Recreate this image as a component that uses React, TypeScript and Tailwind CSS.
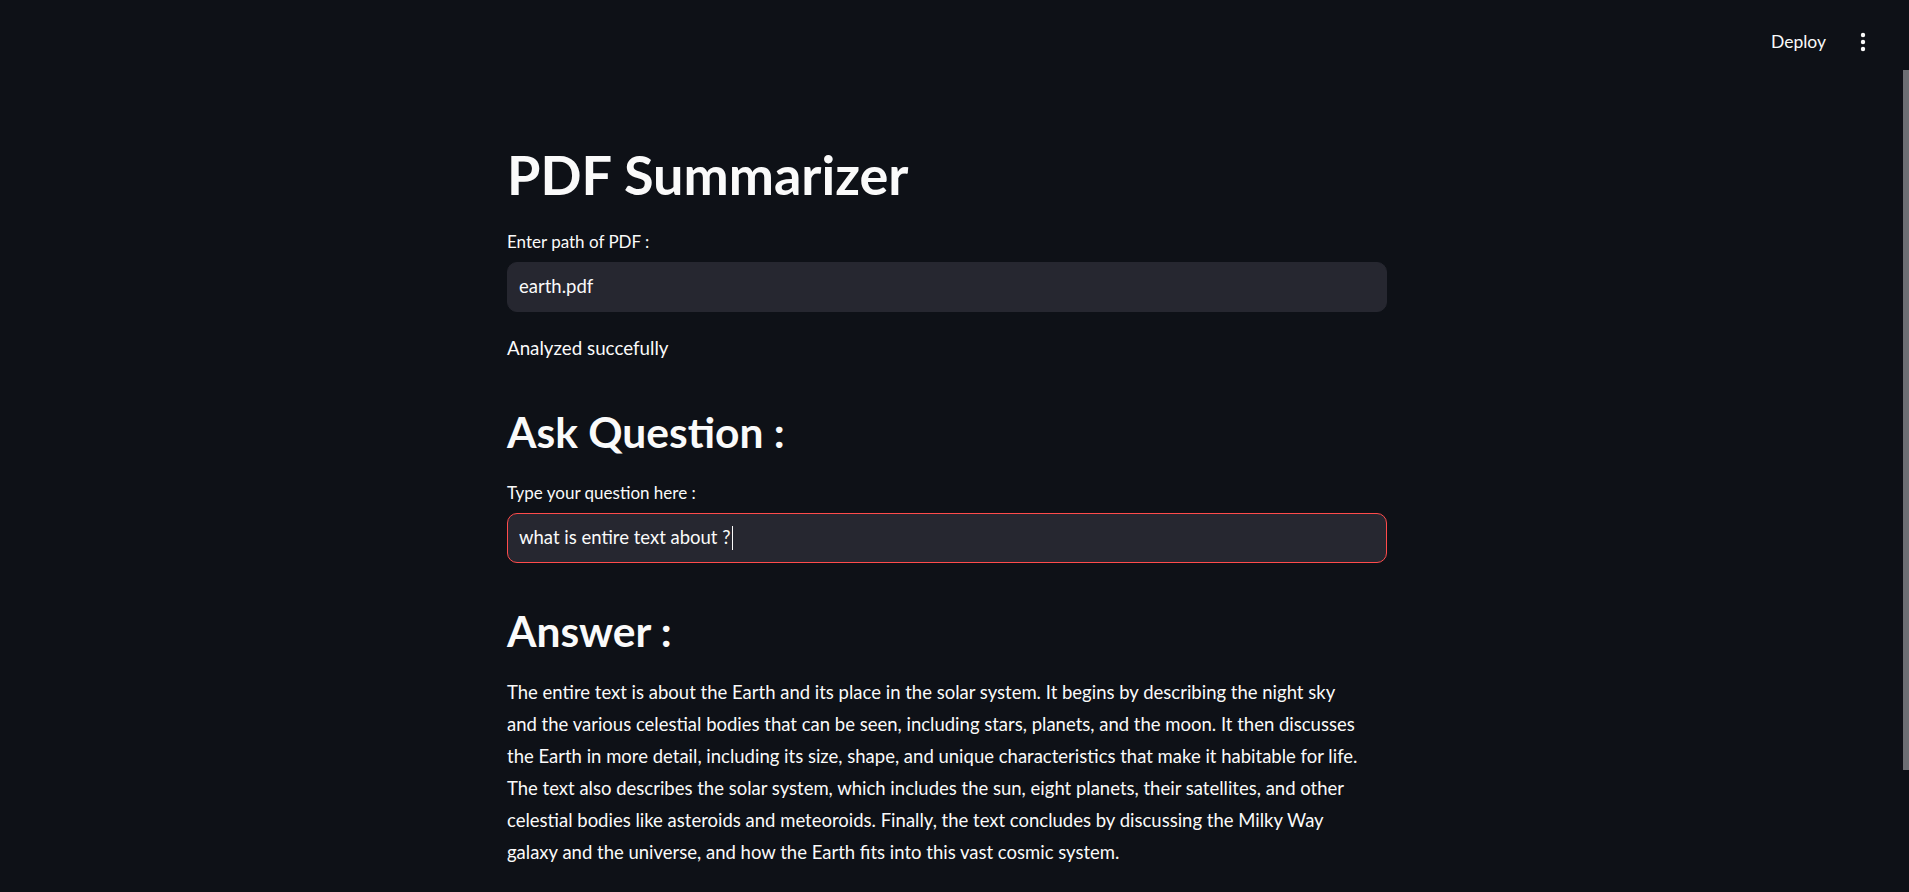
import { useState } from 'react'

const answer = [
  'The entire text is about the Earth and its place in the solar system. It begins by describing the night sky',
  'and the various celestial bodies that can be seen, including stars, planets, and the moon. It then discusses',
  'the Earth in more detail, including its size, shape, and unique characteristics that make it habitable for life.',
  'The text also describes the solar system, which includes the sun, eight planets, their satellites, and other',
  'celestial bodies like asteroids and meteoroids. Finally, the text concludes by discussing the Milky Way',
  'galaxy and the universe, and how the Earth fits into this vast cosmic system.',
]

function KebabIcon() {
  return (
    <svg width="6" height="20" viewBox="0 0 6 20" fill="#fafafa">
      <circle cx="3" cy="3" r="2.2" />
      <circle cx="3" cy="10" r="2.2" />
      <circle cx="3" cy="17" r="2.2" />
    </svg>
  )
}

export default function App() {
  const [path] = useState('earth.pdf')
  const [question] = useState('what is entire text about ?')

  return (
    <div className="relative min-h-screen bg-[#0e1117] text-[#fafafa] font-['Lato','Noto_Sans',sans-serif]">
      {/* Header */}
      <div className="flex h-[75px] items-center justify-end pr-[43px] pt-[8px]">
        <button className="text-[17.5px] leading-none mr-[34px]">Deploy</button>
        <KebabIcon />
      </div>

      {/* Scrollbar thumb */}
      <div className="absolute right-0 top-[70px] h-[700px] w-[6px] bg-[#6c6e73]" />

      {/* Main */}
      <div className="ml-[507px] w-[880px] flex flex-col">
        <h1 className="mt-[68px] text-[54px] leading-[64px] font-bold">PDF Summarizer</h1>

        <label className="mt-[25px] text-[17px] leading-[20px]">Enter path of PDF :</label>
        <div className="mt-[10px] flex h-[50px] items-center rounded-[10px] border border-[#262730] bg-[#262730] px-[11px] text-[18.5px]">
          {path}
        </div>

        <p className="mt-[20px] text-[18.75px] leading-[32px]">Analyzed succefully</p>

        <h2 className="mt-[42px] text-[42.5px] leading-[52px] font-bold">Ask Question :</h2>

        <label className="mt-[25px] text-[17px] leading-[20px]">Type your question here :</label>
        <div className="mt-[10px] flex h-[50px] items-center rounded-[10px] border border-[#ff4b4b] bg-[#262730] px-[11px] text-[18.5px]">
          {question}
          <span className="ml-px inline-block h-[24px] w-px bg-[#fafafa]" />
        </div>

        <h2 className="mt-[42px] text-[42.5px] leading-[52px] font-bold">Answer :</h2>

        <p className="mt-[19px] text-[18.5px] leading-[32px]">
          {answer.map((line, i) => (
            <span key={i} className="block whitespace-nowrap">
              {line}
            </span>
          ))}
        </p>
      </div>
    </div>
  )
}
